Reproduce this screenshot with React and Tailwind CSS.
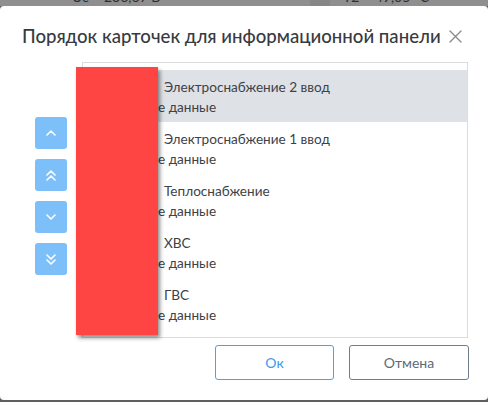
import React from "react";

const font = { fontFamily: 'Lato, "Open Sans", sans-serif' };

function Chevron({ dir = "up", double = false }) {
  const up = "M1 5 L5 1 L9 5";
  const down = "M1 1 L5 5 L9 1";
  const d = dir === "up" ? up : down;
  return (
    <svg width="10" height={double ? 11 : 6} viewBox={double ? "0 0 10 11" : "0 0 10 6"} fill="none" stroke="white" strokeWidth="1.6" strokeLinecap="round" strokeLinejoin="round">
      <path d={d} />
      {double && <path d={d} transform="translate(0 5)" />}
    </svg>
  );
}

const rows = [
  "Электроснабжение 2 ввод",
  "Электроснабжение 1 ввод",
  "Теплоснабжение",
  "ХВС",
  "ГВС",
];

export default function App() {
  return (
    <div className="relative w-[488px] h-[402px] overflow-hidden bg-[#5f5f5f]" style={font}>
      <div className="h-[6px] bg-[#8f8f8f] overflow-hidden flex text-[14px] leading-[14px] text-[#2e2e2e]">
        <div className="w-[310px] pl-[72px] -mt-[10px] whitespace-nowrap">Uc = 236,67 В</div>
        <div className="w-[20px] bg-[#868686]"></div>
        <div className="pl-[13px] -mt-[10px] whitespace-nowrap">T2 = 49,05 °C</div>
      </div>
      <div className="h-[394px] bg-white rounded-[4px] flex flex-col">
        <div className="flex items-center justify-between pl-[22px] pr-[26px] pt-[18px]">
          <div className="text-[18.6px] leading-[24px] font-medium text-[#373b3f] whitespace-nowrap">
            Порядок карточек для информационной панели
          </div>
          <svg width="13" height="13" viewBox="0 0 13 13" stroke="#8a8a8a" strokeWidth="1.4" strokeLinecap="round">
            <path d="M1 1 L12 12 M12 1 L1 12" />
          </svg>
        </div>
        <div className="flex items-start mt-[14px] pl-[35px] pr-[20px]">
          <div className="flex flex-col gap-[10px] mt-[55px]">
            <button className="w-[32px] h-[32px] rounded-[3px] bg-[#7cbff9] flex items-center justify-center">
              <Chevron dir="up" />
            </button>
            <button className="w-[32px] h-[32px] rounded-[3px] bg-[#7cbff9] flex items-center justify-center">
              <Chevron dir="up" double />
            </button>
            <button className="w-[32px] h-[32px] rounded-[3px] bg-[#7cbff9] flex items-center justify-center">
              <Chevron dir="down" />
            </button>
            <button className="w-[32px] h-[32px] rounded-[3px] bg-[#7cbff9] flex items-center justify-center">
              <Chevron dir="down" double />
            </button>
          </div>
          <div className="ml-[15px] flex-1 h-[276px] border border-[#dcdcdc] pt-[7px]">
            {rows.map((r, i) => (
              <div
                key={r}
                className={`h-[52px] pt-[7px] pl-[75px] text-[13.6px] leading-[20px] text-[#3e4246] ${i === 0 ? "bg-[#dee1e5]" : ""}`}
              >
                <div className="pl-[6px] whitespace-nowrap">{r}</div>
                <div className="whitespace-nowrap">е данные</div>
              </div>
            ))}
          </div>
        </div>
        <div className="flex justify-end gap-[15px] pr-[19px] mt-[7px]">
          <button className="w-[119px] h-[35px] rounded-[3px] border border-[#4aa3ea] text-[#3d9be9] text-[14px]">
            Ок
          </button>
          <button className="w-[120px] h-[35px] rounded-[3px] border border-[#6e7d89] text-[#5c6b77] text-[14px]">
            Отмена
          </button>
        </div>
      </div>
      <div className="absolute left-[76px] top-[67px] w-[82px] h-[268px] bg-[#ff4444] shadow-[2px_3px_4px_rgba(0,0,0,0.45)]"></div>
    </div>
  );
}
